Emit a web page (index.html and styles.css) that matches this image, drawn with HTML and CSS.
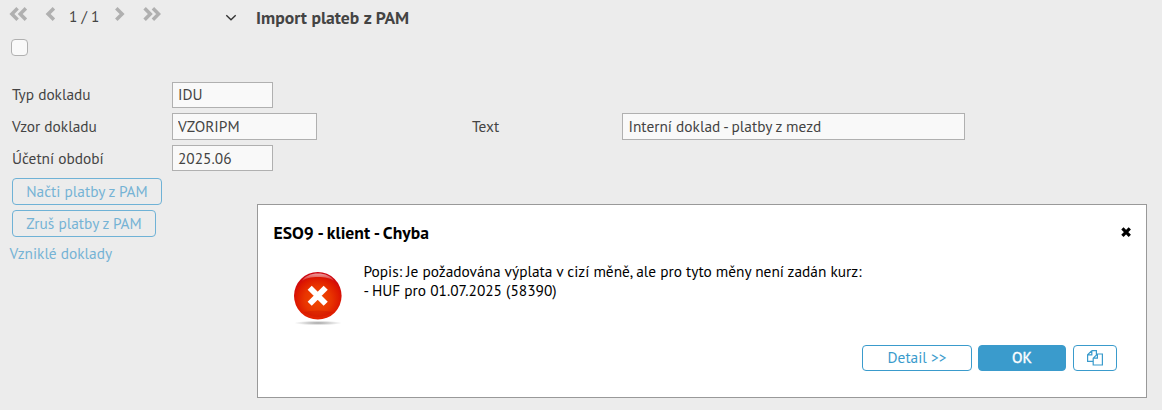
FILE: index.html
```
<!DOCTYPE html>
<html lang="cs">
<head>
    <meta charset="UTF-8">
    <title>Import plateb z PAM</title>
    <link rel="stylesheet" href="styles.css">
</head>
<body>

    <header class="toolbar">
        <nav class="pager">
            <svg class="first" width="18" height="14" viewBox="0 0 18 14"><path d="M8.6 1.3 L2.9 7 L8.6 12.7 M16.9 1.3 L11.2 7 L16.9 12.7"/></svg>
            <svg class="prev" width="10" height="14" viewBox="0 0 10 14"><path d="M8.9 1.3 L3.1 7 L8.9 12.7"/></svg>
            <span class="count">1 / 1</span>
            <svg class="next" width="10" height="14" viewBox="0 0 10 14"><path d="M1.3 1.3 L7.1 7 L1.3 12.7"/></svg>
            <svg class="last" width="18" height="14" viewBox="0 0 18 14"><path d="M1.6 1.3 L7.3 7 L1.6 12.7 M9.9 1.3 L15.6 7 L9.9 12.7"/></svg>
        </nav>
        <svg class="expand" width="12" height="8" viewBox="0 0 12 8"><path d="M1.3 1.3 L6 5.7 L10.7 1.3"/></svg>
        <h1>Import plateb z PAM</h1>
    </header>

    <input type="checkbox" class="check">

    <main class="form">
        <div class="row">
            <label for="typ">Typ dokladu</label>
            <input type="text" class="short" id="typ" value="IDU">
        </div>
        <div class="row">
            <label for="vzor">Vzor dokladu</label>
            <input type="text" class="medium" id="vzor" value="VZORIPM">
            <label for="text" class="second">Text</label>
            <input type="text" class="long" id="text" value="Interní doklad - platby z mezd">
        </div>
        <div class="row">
            <label for="obdobi">Účetní období</label>
            <input type="text" class="short" id="obdobi" value="2025.06">
        </div>
        <button class="action load">Načti platby z PAM</button>
        <button class="action cancel">Zruš platby z PAM</button>
        <a class="link">Vzniklé doklady</a>
    </main>

    <section class="dialog" role="dialog">
        <div class="dialog-head">
            <h2>ESO9 - klient - Chyba</h2>
            <svg class="close" width="12" height="12" viewBox="0 0 12 12"><path d="M2.4 2.4 L9.8 9.8 M9.8 2.4 L2.4 9.8"/></svg>
        </div>
        <div class="dialog-body">
            <svg class="error" width="52" height="56" viewBox="0 0 52 56">
                <defs>
                    <radialGradient id="red" cx="50%" cy="58%" r="56%">
                        <stop offset="0" stop-color="#f04a00"/>
                        <stop offset="0.5" stop-color="#e93500"/>
                        <stop offset="0.82" stop-color="#dd1800"/>
                        <stop offset="1" stop-color="#cc0610"/>
                    </radialGradient>
                    <linearGradient id="shine" x1="0" y1="0" x2="0" y2="1">
                        <stop offset="0" stop-color="#fff" stop-opacity="0.6"/>
                        <stop offset="1" stop-color="#fff" stop-opacity="0.1"/>
                    </linearGradient>
                    <radialGradient id="shadow">
                        <stop offset="0" stop-color="#888" stop-opacity="0.8"/>
                        <stop offset="1" stop-color="#999" stop-opacity="0"/>
                    </radialGradient>
                </defs>
                <ellipse cx="26" cy="52" rx="24" ry="2.3" fill="url(#shadow)"/>
                <circle cx="25.8" cy="24.8" r="23.8" fill="url(#red)"/>
                <path d="M10 10 C15 0 37 0 42 10 C36 4.5 16 4.5 10 10Z" fill="url(#shine)"/>
                <path d="M11 41 Q26 38 41 41 Q26 51 11 41Z" fill="#b80000" opacity="0.25"/>
                <path d="M17.7 16.7 L33.7 32.7 M33.7 16.7 L17.7 32.7" stroke="#fff" stroke-width="5.8"/>
            </svg>
            <p class="message"><span>Popis: Je požadována výplata v cizí měně, ale pro tyto měny není zadán kurz:</span><br>- HUF pro 01.07.2025 (58390)</p>
        </div>
        <div class="dialog-buttons">
            <button class="detail">Detail &gt;&gt;</button>
            <button class="ok">OK</button>
            <button class="copy">
                <svg width="16" height="16" viewBox="0 0 16 16"><path d="M4.8 .6 H9.4 V5 M4.8 .6 L.6 4.8 V11.4 H6 M.6 4.8 H4.8 V.6 M6.2 15 V8.2 L10.4 4 H15.4 V15 Z M10.4 4 V8.2 H6.2"/></svg>
            </button>
        </div>
    </section>

</body>
</html>
```
FILE: styles.css
```
* {
    box-sizing: border-box;
}

body {
    margin: 0;
    height: 410px;
    overflow: hidden;
    background-color: #ececec;
    color: #444;
    font-family: "PT Sans", "Open Sans", "Noto Sans", sans-serif;
    font-size: 15.36px;
    line-height: 19px;
}

input, button {
    font: inherit;
    color: inherit;
}

svg {
    display: block;
    flex: none;
    fill: none;
}

/* Horní lišta */
.toolbar {
    display: flex;
    align-items: flex-start;
    height: 39px;
    padding: 7px 0 0 9px;
}

.pager {
    display: flex;
    width: 216px;
}

.pager svg {
    stroke: #b0b0b0;
    stroke-width: 3.5;
}

.prev {
    margin-left: 18px;
}

.count {
    width: 60px;
    padding-left: 14px;
    white-space: nowrap;
}

.last {
    margin-left: 18px;
}

.expand {
    margin-top: 7px;
    stroke: #333;
    stroke-width: 1.4;
}

h1 {
    margin: 1px 0 0 19px;
    font-size: 17.6px;
    line-height: 20px;
    font-weight: bold;
}

.check {
    display: block;
    appearance: none;
    width: 17px;
    height: 17px;
    margin: 0 0 0 11px;
    border: 1px solid #b0b0b0;
    border-radius: 4px;
    background-color: #f9f9f9;
}

/* Formulář */
.form {
    display: flex;
    flex-direction: column;
    align-items: flex-start;
    padding: 26px 0 0 12px;
}

.row {
    display: flex;
    height: 32px;
}

.row:first-child {
    height: 31px;
}

.row:nth-child(3) {
    height: 33px;
}

.row label {
    width: 160px;
    padding-top: 4px;
}

.row:first-child label {
    padding-top: 3px;
}

.row .second {
    width: 150px;
    margin-left: 155px;
}

.row input {
    height: 26px;
    padding: 0 5px 1px;
    border: 1px solid #b0b0b0;
    background-color: #f9f9f9;
}

.row:first-child input {
    padding-bottom: 3px;
}

.row .short {
    width: 101px;
}

.row .medium {
    width: 145px;
    height: 27px;
}

.row .long {
    width: 343px;
    height: 27px;
    padding-left: 5.5px;
}

.action {
    height: 27px;
    margin-bottom: 5px;
    padding: 0;
    border: 1px solid #6fb2d6;
    border-radius: 4px;
    background: none;
    color: #75b3d5;
}

.load {
    width: 150px;
}

.cancel {
    width: 144px;
}

.link {
    margin: 2px 0 0 -2.5px;
    color: #75b3d5;
}

/* Chybové okno */
.dialog {
    position: absolute;
    left: 257px;
    top: 204px;
    width: 890px;
    height: 194px;
    border: 1px solid #999;
    background-color: #fff;
    color: #000;
}

.dialog-head {
    display: flex;
    justify-content: space-between;
    padding: 18px 14px 0 15.5px;
}

h2 {
    margin: 0;
    font-size: 17.6px;
    line-height: 20px;
}

.close {
    margin-top: 3px;
    stroke: #000;
    stroke-width: 3.2;
}

.dialog-body {
    display: flex;
    height: 102px;
    padding: 28px 0 0 34px;
}

.message {
    margin: -9px 0 0 19.5px;
}

.dialog-buttons {
    display: flex;
    justify-content: flex-end;
    gap: 6px;
    padding-right: 29px;
}

.dialog-buttons button {
    height: 26px;
    padding: 0 0 2px;
    border: 1px solid #3a9bcc;
    border-radius: 4px;
    background-color: #fff;
    color: #3a9bcc;
}

.dialog-buttons .detail {
    width: 110px;
}

.dialog-buttons .ok {
    width: 88px;
    background-color: #3a9bcc;
    color: #fff;
    -webkit-text-stroke: 0.4px #fff;
}

.dialog-buttons .copy {
    display: flex;
    align-items: center;
    justify-content: center;
    width: 44px;
    margin-left: 1px;
    padding: 0;
}

.copy svg {
    stroke: #3a9bcc;
    stroke-width: 1.2;
}
```
